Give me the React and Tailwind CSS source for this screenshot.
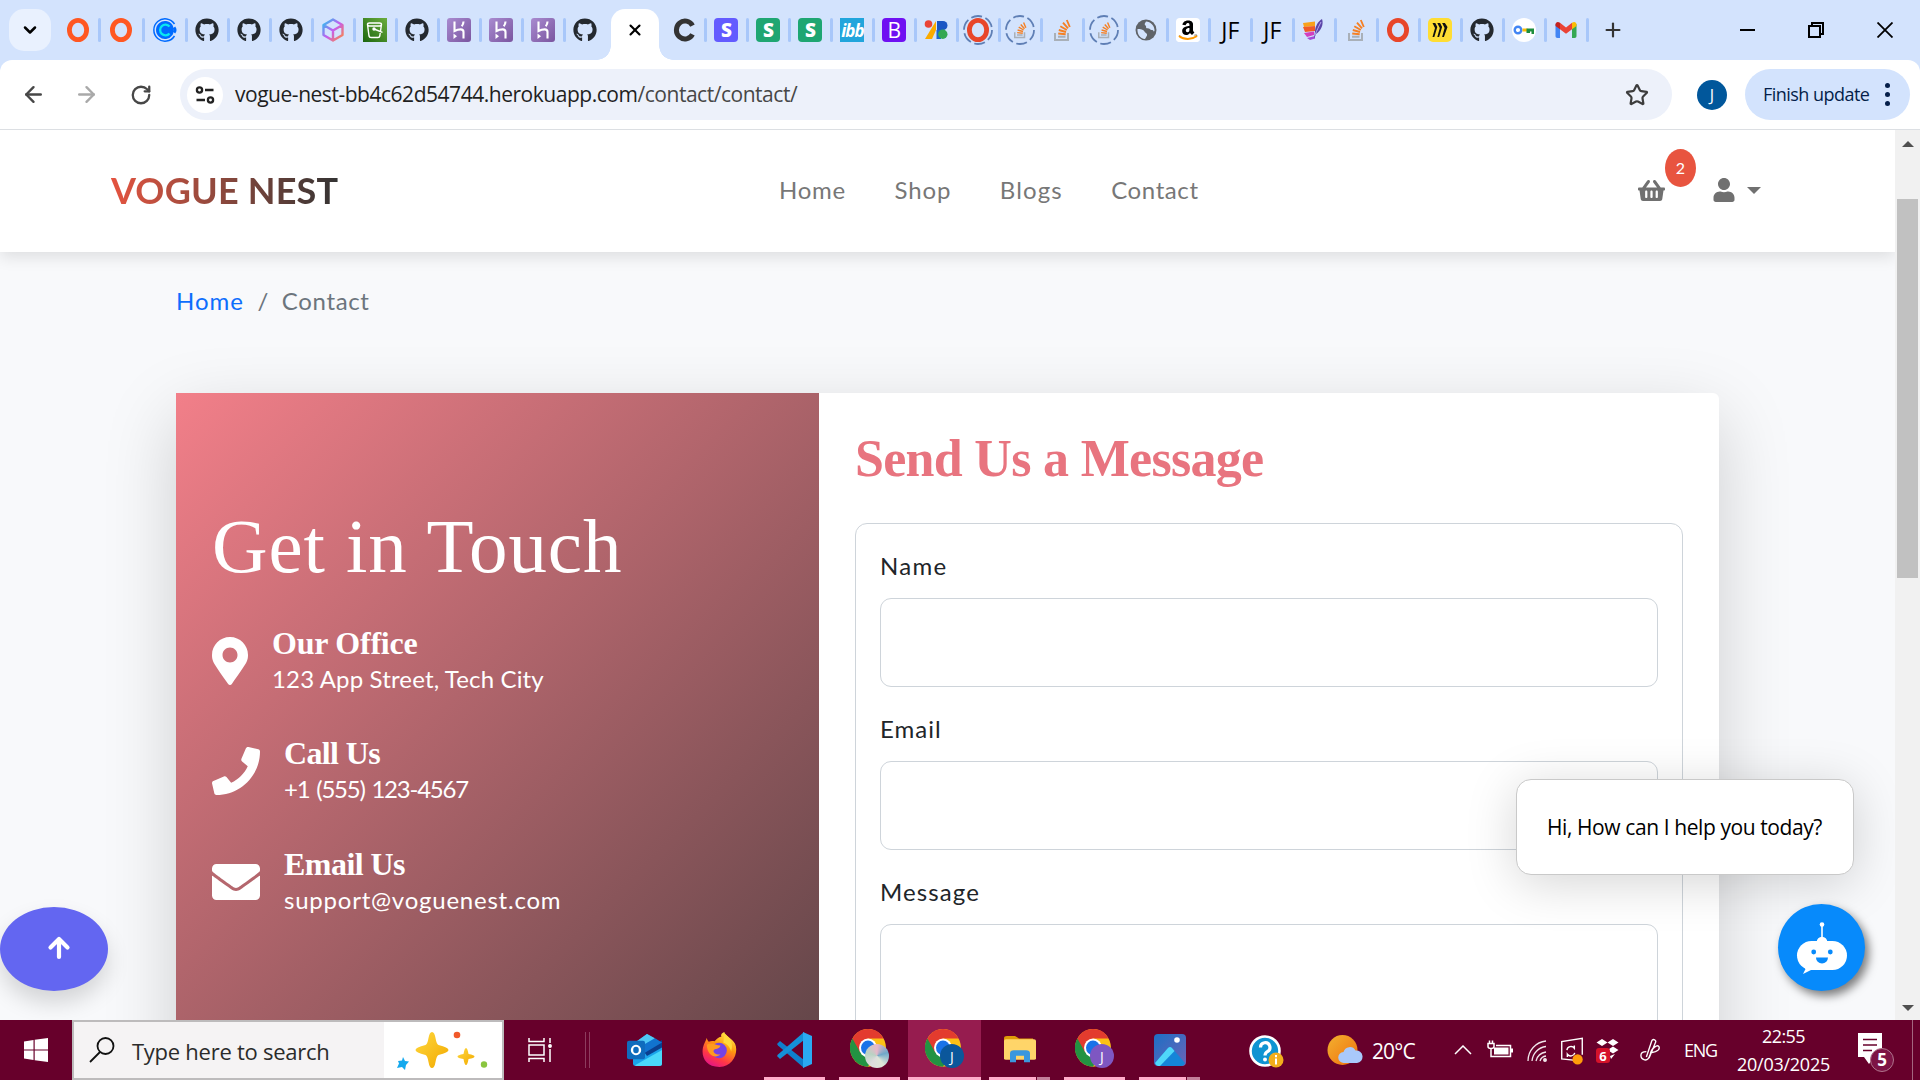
import {
  FaGithub, FaAmazon, FaShoppingBasket, FaUser, FaMapMarkerAlt, FaPhone, FaEnvelope,
} from "react-icons/fa";
import { ChevronDown, X, ArrowLeft, ArrowRight, Star, Plus, RotateCw } from "lucide-react";

/* ---------- favicons ---------- */

const Ring = ({ color }) => (
  <svg viewBox="0 0 24 24" className="size-6"><ellipse cx="12" cy="12" rx="8.6" ry="9.6" fill="none" stroke={color} strokeWidth="4.8" /></svg>
);
const Github = () => <FaGithub className="size-6 text-[#24292f]" />;
const Calendly = () => (
  <svg viewBox="0 0 24 24" className="size-6" fill="none">
    <path d="M21.500 6A11.200 11.200 0 1 0 21.500 18" stroke="#006bff" strokeWidth="1.500" />
    <path d="M19.500 7A9 9 0 1 0 19.500 17Q22 12 19.500 7z" fill="#006bff" />
    <path d="M16.500 8.600A5.300 5.300 0 1 0 16.500 15.400" stroke="#0ae8f0" strokeWidth="2.300" />
    <path d="M21 9.500q2 2.500 0 5" stroke="#006bff" strokeWidth="3" />
  </svg>
);
const Cube = () => (
  <svg viewBox="0 0 24 24" className="size-6" fill="none" strokeWidth="2.4" strokeLinejoin="round">
    <defs>
      <linearGradient id="cube" x1="0" y1="0" x2="1" y2="1">
        <stop offset="0" stopColor="#22c7f0" /><stop offset=".5" stopColor="#c45cf0" /><stop offset="1" stopColor="#ff8a3c" />
      </linearGradient>
    </defs>
    <path d="M12 1.5 21.5 7v10L12 22.5 2.5 17V7zM2.5 7l9.500 5.500L21.500 7M12 12.500v10" stroke="url(#cube)" />
  </svg>
);
const Bucket = () => (
  <svg viewBox="0 0 24 24" className="size-6" fill="none" stroke="#fff" strokeWidth="1.4">
    <defs><linearGradient id="s3" x1="0" y1="1" x2="1" y2="0"><stop stopColor="#1b660f" /><stop offset="1" stopColor="#6cae3e" /></linearGradient></defs>
    <path d="M0 0h24v24H0z" fill="url(#s3)" stroke="none" />
    <path d="M4.500 6.500q0-1.500 2-1.500h10q2 0 2 1.500t-2 1.500h-10q-2 0-2-1.500L6 18q.3 1.500 2 1.500h7q1.500 0 1.800-1.500l1.700-11.500M11 11l8.500 3.300" />
    <circle cx="11" cy="11" r="1" fill="#fff" />
  </svg>
);
const Heroku = () => (
  <svg viewBox="0 0 24 24" className="size-6" fill="none" stroke="#fff" strokeWidth="2.1">
    <defs><linearGradient id="hk" x1="0" y1="0" x2="1" y2="1"><stop stopColor="#a98bd0" /><stop offset="1" stopColor="#7a559f" /></linearGradient></defs>
    <rect width="24" height="24" rx="3" fill="url(#hk)" stroke="none" />
    <path d="M7.500 3.500v9.500c2-1 4-1.600 6.200-1.600 2 0 2.800 1 2.800 2.600v6.500M16.500 3.500c0 1.900-.8 3.600-1.800 4.700" />
    <path d="M6.500 15.500l3.500 2.700-3.500 2.800z" fill="#fff" stroke="none" />
  </svg>
);
const LetterC = () => (
  <svg viewBox="0 0 24 24" className="size-6" fill="none"><path d="M20.500 7.600A8.600 9 0 1 0 20.500 16.400" stroke="#333" strokeWidth="5" /></svg>
);
const Letter = ({ className, children }) => (
  <span className={"flex size-6 items-center justify-center leading-none " + className}>{children}</span>
);
const Stripe = ({ className }) => <Letter className={"rounded-[4px] text-[19px] font-extrabold text-white font-['Open_Sans'] " + className}>S</Letter>;
const Abstract = () => (
  <svg viewBox="0 0 24 24" className="size-6">
    <circle cx="4.500" cy="6" r="3.800" fill="#ea4335" />
    <path d="M12 3v9l-4 9H1z" fill="#fbab00" />
    <path d="M13 3h6a4.500 4.500 0 0 1 0 9h-6z" fill="#1a56c4" />
    <path d="M12.500 12H17v9h-4.500z" fill="#1967d2" />
    <circle cx="18.800" cy="16.300" r="4.700" fill="#34a853" />
  </svg>
);
const Stack = ({ className }) => (
  <svg viewBox="0 0 24 24" className={className} fill="none">
    <path d="M5 15v7h13v-7M8 18.800h7.500" stroke="#a9b0b8" strokeWidth="2" />
    <path d="M8.200 15.500l7.500.8M8.800 12l7.200 2M10.300 8.200l6.500 3.800M13 4.600l5 5.700M16.800 2l3 7" stroke="#f58025" strokeWidth="1.900" />
  </svg>
);
const Loading = ({ children }) => (
  <span className="relative flex size-[30px] shrink-0 items-center justify-center">
    <svg viewBox="0 0 30 30" className="absolute inset-0" fill="none">
      <circle cx="15" cy="15" r="14" stroke="#5f7fb5" strokeWidth="1.800" strokeDasharray="11 3.660" />
    </svg>
    {children}
  </span>
);
const Globe = () => (
  <svg viewBox="0 0 24 24" className="size-6">
    <circle cx="12" cy="12" r="10.500" fill="#5f6368" />
    <path d="M3.500 11c3 0 6 .5 7 2.500s3 1.500 2.500 4l-2 3.500C6 20.500 3 16 3.500 11zM12 3.500c-1 2-2 2.500-.5 4s-.5 2.800 2 2.800 2.500 2 4.500 1.700 1 2.500 2.500 1c.5-5-4-9.500-8.500-9.500z" fill="#d3e3fd" />
  </svg>
);
const Amazon = () => (
  <span className="relative flex size-6 items-center justify-center overflow-hidden rounded-[4px] bg-white">
    <FaAmazon className="size-[22px] text-black" />
    <svg viewBox="0 0 24 24" className="absolute inset-0"><path d="M0 17.500h24v6.500H0z" fill="#fff" /><path d="M3 18c5 4 12.500 4 18 0" stroke="#ff9900" strokeWidth="2" fill="none" /></svg>
  </span>
);
const Feather = () => (
  <svg viewBox="0 0 24 24" className="size-6">
    <path d="M1 5l12-1.500V8L2 9z" fill="#f9a11b" /><path d="M1 9l12-1v5L3 14z" fill="#f05a28" />
    <path d="M2 15l10-1.500V17L5 19z" fill="#d23fbf" /><path d="M5 20l8-2v2.500L8 22z" fill="#a44bd8" />
    <path d="M20 1c2 5-1 12-6 15l-2 5 1-8c.5-5 3-9.500 7-12z" fill="#5b45a8" />
    <path d="M19 4c-2 4-4 8-6 13" stroke="#b9a7f0" fill="none" />
  </svg>
);
const Miro = () => (
  <svg viewBox="0 0 24 24" className="size-6" fill="#111">
    <rect width="24" height="24" rx="5" fill="#ffdd33" />
    <path d="M4.500 5h2.800l2 4-3 10H4.500L7 10zM9.300 5h2.800l2 4-3 10H9.300l2.500-9zM14.100 5h2.800l2.600 4-3.600 10h-1.800l2.500-9z" />
  </svg>
);
const Key = () => (
  <span className="flex size-6 items-center justify-center rounded-full bg-white">
    <svg viewBox="0 0 22 12" className="w-[22px]" fill="none">
      <circle cx="5" cy="6" r="3.300" stroke="#4285f4" strokeWidth="2.400" />
      <path d="M9.500 6h5" stroke="#fbbc04" strokeWidth="3" /><path d="M13.500 4.500H21V10h-2.500V7.500H17V9h-3.500z" fill="#1e8e3e" />
    </svg>
  </span>
);
const Gmail = () => (
  <svg viewBox="0 0 24 24" className="size-6">
    <path d="M1.500 6v12c0 1 .7 2 2 2H6V9z" fill="#4285f4" /><path d="M22.500 6v12c0 1-.7 2-2 2H18V9z" fill="#34a853" />
    <path d="M6 4.800v6.400l6 4.600 6-4.600V4.800L12 9.500z" fill="#ea4335" />
    <path d="M1.500 6.500C1.500 4 4 3.200 6 4.800v6.400L1.500 8z" fill="#c5221f" /><path d="M22.500 6.500c0-2.500-2.500-3.300-4.500-1.700v6.400L22.500 8z" fill="#fbbc04" />
  </svg>
);
const Jf = () => <span className="text-[23px] tracking-[0.2px] text-black">JF</span>;

const leftTabs = [
  <Ring color="#ff5722" />, <Ring color="#ff5722" />, <Calendly />, <Github />, <Github />, <Github />, <Cube />,
  <Bucket />, <Github />, <Heroku />, <Heroku />, <Heroku />, <Github />,
];
const rightTabs = [
  <LetterC />, <Stripe className="bg-[#635bff]" />, <Stripe className="bg-[#1fa672]" />, <Stripe className="bg-[#1fa672]" />,
  <Letter className="bg-[#21a5dc] text-[17px] font-bold italic tracking-[-1px] text-white">ibb</Letter>,
  <Letter className="rounded-[4px] bg-[#6f10f2] text-[21px] text-white">B</Letter>,
  <Abstract />,
  <Loading><Ring color="#e8462a" /></Loading>,
  <Loading><Stack className="size-[18px]" /></Loading>,
  <Stack className="size-6" />,
  <Loading><Stack className="size-[18px]" /></Loading>,
  <Globe />, <Amazon />, <Jf />, <Jf />, <Feather />, <Stack className="size-6" />, <Ring color="#e8462a" />, <Miro />,
  <Github />, <Key />, <Gmail />,
];

function Tab({ children, divider = true, wide = false }) {
  return (
    <div className={"flex h-6 items-center " + (wide ? "w-[43.3px]" : "w-[42px]")}>
      <div className="flex flex-1 items-center justify-center overflow-visible">{children}</div>
      <div className={"h-6 w-[3px] rounded-sm " + (divider ? "bg-[#a8c7fa]" : "")} />
    </div>
  );
}

function TabStrip() {
  return (
    <div className="flex h-[60px] items-center bg-[#d3e3fd]">
      <div className="ml-[9px] flex size-[42px] items-center justify-center rounded-[15px] bg-[#e9f1fe]">
        <ChevronDown className="size-[20px]" strokeWidth={3} />
      </div>
      <div className="ml-[7px] flex">
        {leftTabs.map((icon, i) => <Tab key={i} wide={i < 3} divider={i < 12}>{icon}</Tab>)}
      </div>
      <div className="relative ml-[3px] flex h-[51px] w-12 items-center justify-center self-end rounded-t-[14px] bg-white">
        <span className="absolute -left-[14px] bottom-0 h-[14px] w-[14px] bg-[radial-gradient(circle_at_0_0,transparent_13.5px,white_14px)]" />
        <span className="absolute -right-[14px] bottom-0 h-[14px] w-[14px] bg-[radial-gradient(circle_at_100%_0,transparent_13.5px,white_14px)]" />
        <X className="-mt-[9px] size-[18px] text-black" strokeWidth={2.8} />
      </div>
      <div className="ml-[6px] flex">
        {rightTabs.map((icon, i) => <Tab key={i}>{icon}</Tab>)}
      </div>
      <Plus className="ml-[13px] size-[22px] text-[#333]" strokeWidth={2.4} />
      <div className="ml-auto flex items-center gap-[53px] pr-[27px]">
        <div className="h-[2px] w-[15px] bg-black" />
        <svg viewBox="0 0 16 16" className="size-4" fill="none" stroke="#000" strokeWidth="2"><path d="M1 4h11v11H1zM4 4V1h11v11h-3" /></svg>
        <svg viewBox="0 0 16 16" className="size-4" fill="none" stroke="#000" strokeWidth="1.800"><path d="M.5.5l15 15M15.500.5l-15 15" /></svg>
      </div>
    </div>
  );
}

function Toolbar() {
  return (
    <div className="bg-[#d3e3fd]">
      <div className="flex h-[70px] items-center rounded-t-[12px] border-b border-[#dcdfe3] bg-white">
        <ArrowLeft className="ml-[21px] size-[25px] text-[#474747]" strokeWidth={2.3} />
        <ArrowRight className="ml-[28px] size-[25px] text-[#a9a9a9]" strokeWidth={2.3} />
        <RotateCw className="ml-[31px] size-[22px] text-[#474747]" strokeWidth={2.5} />
        <div className="ml-[28px] flex h-[51px] w-[1492px] items-center rounded-full bg-[#edf1fa] pl-[7px]">
          <div className="flex size-9 items-center justify-center rounded-full bg-white">
            <svg viewBox="0 0 20 20" className="size-5" fill="none" stroke="#222" strokeWidth="2.300">
              <circle cx="4.500" cy="5" r="2.600" /><path d="M10 5h8.500M1.500 15H10" /><circle cx="15.500" cy="15" r="2.600" />
            </svg>
          </div>
          <div className="ml-[12px] text-[21px] tracking-[-0.47px] text-[#1f1f1f]">
            vogue-nest-bb4c62d54744.herokuapp.com<span className="text-[#474747]">/contact/contact/</span>
          </div>
          <Star className="ml-auto mr-[23px] size-[24px] text-[#3c3c3c]" strokeWidth={2.2} strokeLinejoin="miter" />
        </div>
        <div className="ml-[25px] flex size-[30px] items-center justify-center rounded-full bg-[#01579b] text-base text-white">J</div>
        <div className="ml-[18px] flex h-[51px] w-[165px] items-center rounded-full bg-[#d3e3fd] pl-[18px]">
          <span className="text-[18px] tracking-[-0.53px] text-[#041e49]">Finish update</span>
          <div className="ml-[16px] flex flex-col gap-[4px]">
            <i className="size-[5px] rounded-full bg-[#041e49]" /><i className="size-[5px] rounded-full bg-[#041e49]" /><i className="size-[5px] rounded-full bg-[#041e49]" />
          </div>
        </div>
      </div>
    </div>
  );
}

/* ---------- site ---------- */

function SiteHeader() {
  return (
    <header className="relative z-10 flex h-[122px] items-center bg-white pb-[2px] pl-[111px] font-[Lato] shadow-[0_5px_15px_rgba(0,0,0,0.11)]">
      <div className="w-[668px]">
        <span className="bg-linear-to-r from-[#e5533f] to-[#333] bg-clip-text text-[36px] font-bold tracking-[0.2px] text-transparent">VOGUE NEST</span>
      </div>
      <nav className="flex gap-[48.400px] text-[24px] text-[#777]">
        <a className="tracking-[0.76px]">Home</a>
        <a className="tracking-[0.93px]">Shop</a>
        <a className="tracking-[1.13px]">Blogs</a>
        <a className="tracking-[0.6px]">Contact</a>
      </nav>
      <div className="ml-auto mr-[134px] flex items-center text-[#707070]">
        <div className="relative">
          <FaShoppingBasket className="size-[27px]" />
          <span className="absolute -top-[28px] left-[27px] flex h-[38px] w-[31px] items-center justify-center rounded-[50%] bg-[#e8543f] text-[16px] text-white">2</span>
        </div>
        <FaUser className="ml-[47px] size-[24px]" />
        <span className="ml-[11px] border-x-[7px] border-t-[7px] border-x-transparent border-t-[#707070]" />
      </div>
    </header>
  );
}

const contacts = [
  { Icon: FaMapMarkerAlt, box: "w-9", title: "Our Office", titleCls: "tracking-[-0.24px]", text: "123 App Street, Tech City", textCls: "tracking-[0.15px]" },
  { Icon: FaPhone, box: "w-12", title: "Call Us", titleCls: "tracking-[-0.64px]", text: "+1 (555) 123-4567", textCls: "tracking-[-1.25px] [word-spacing:2px]" },
  { Icon: FaEnvelope, box: "w-12", title: "Email Us", titleCls: "tracking-[-0.54px]", text: "support@voguenest.com", textCls: "tracking-[0.77px]" },
];

function InfoPanel() {
  return (
    <section className="h-[1045px] w-[643px] bg-[linear-gradient(135deg,#f27f89,#363435)] pl-9 pt-[108px] text-white">
      <h2 className="font-['Liberation_Serif'] text-[77px] leading-[90px] tracking-[0.9px]">Get in Touch</h2>
      <div className="mt-[33.500px] flex flex-col gap-[38.500px]">
        {contacts.map(({ Icon, box, title, titleCls, text, textCls }) => (
          <div key={title} className="flex h-[72px] items-center gap-6">
            <Icon className={"h-12 " + box} />
            <div>
              <h4 className={"font-['Liberation_Serif'] text-[32px] font-bold leading-9 " + titleCls}>{title}</h4>
              <p className={"font-[Lato] text-[24px] leading-9 " + textCls}>{text}</p>
            </div>
          </div>
        ))}
      </div>
    </section>
  );
}

function Field({ label, className, height }) {
  return (
    <div className="mb-6 font-[Lato]">
      <label className={"block h-[50px] text-[24px] leading-9 text-[#212529] " + className}>{label}</label>
      <div className={"rounded-[11px] border border-[#ced4da] bg-white " + height} />
    </div>
  );
}

function FormPanel() {
  return (
    <section className="flex-1 px-9 pt-[35px]">
      <h3 className="font-['Liberation_Serif'] text-[52px] font-bold leading-[62px] tracking-[-0.7px] text-[#e8747f]">Send Us a Message</h3>
      <div className="mt-[33px] rounded-[12px] border border-[#ced4da] px-6 pt-[24px] pb-10">
        <Field label="Name" className="tracking-[1.3px]" height="h-[89px]" />
        <Field label="Email" className="tracking-[1px]" height="h-[89px]" />
        <Field label="Message" className="tracking-[1.1px]" height="h-[300px]" />
      </div>
    </section>
  );
}

function ChatWidget() {
  return (
    <div className="absolute bottom-[29px] right-[30px] z-20 flex flex-col items-end gap-[29px]">
      <div className="mr-[11px] flex h-[96px] w-[338px] items-center rounded-[15px] border border-[#c9c9c9] bg-white pl-[30px] pt-[2px] text-[21px] tracking-[-0.41px] text-black shadow-[0_8px_50px_rgba(0,0,0,0.17)]">
        Hi, How can I help you today?
      </div>
      <div className="size-[87px] rounded-full bg-[#078afb] shadow-[4px_5px_10px_rgba(0,0,0,0.5)]">
        <svg viewBox="0 0 87 87" className="size-full" fill="#fff">
          <circle cx="44" cy="20.500" r="2.300" /><path d="M43.200 21h1.600v14h-1.600z" />
          <circle cx="44" cy="38" r="5.300" />
          <rect x="19" y="37" width="50" height="29" rx="14.500" />
          <path d="M26 63l1.500 2-2.500 5 9-4.500z" />
          <circle cx="35.700" cy="48" r="2.400" fill="#078afb" /><circle cx="52.300" cy="48" r="2.400" fill="#078afb" />
          <path d="M38 53.500h12a6 6 0 0 1-12 0z" fill="#078afb" />
        </svg>
      </div>
    </div>
  );
}

function ScrollTop() {
  return (
    <div className="absolute bottom-[29px] left-0 z-20 flex h-[84px] w-[108px] items-center justify-center rounded-[50%] bg-[#6366f1] pl-[9px] shadow-[0_12px_22px_rgba(0,0,0,0.15)]">
      <svg viewBox="0 0 24 24" className="-mt-[2px] size-6" fill="none" stroke="#fff" strokeWidth="4.200" strokeLinecap="round" strokeLinejoin="round">
        <path d="M12 21V3M3.500 11.500L12 3l8.500 8.500" />
      </svg>
    </div>
  );
}

function Scrollbar() {
  return (
    <div className="flex w-[25px] flex-col items-center bg-[#f1f1f1]">
      <span className="mt-[11px] border-x-[6px] border-b-[6px] border-x-transparent border-b-[#505050]" />
      <div className="mt-[52px] h-[379px] w-[21px] bg-[#c1c1c1]" />
      <span className="mb-[9px] mt-auto border-x-[6px] border-t-[6px] border-x-transparent border-t-[#505050]" />
    </div>
  );
}

/* ---------- taskbar ---------- */

const Chrome = ({ badge, children }) => (
  <span className="relative h-[49px] w-[39px]">
    <svg viewBox="0 0 36 44" preserveAspectRatio="none" className="absolute left-0 top-0 h-[45px] w-9">
      <g transform="matrix(1 0 0 1.020 0 4)">
        <circle cx="18" cy="18" r="18" fill="#fbc116" />
        <path d="M18 18L2.400 9A18 18 0 0 0 18 36l7.800-13.500z" fill="#229342" />
        <path d="M18 9h15.600A18 18 0 0 0 2.400 9l7.800 13.500z" fill="#e33b2e" />
        <circle cx="18" cy="18" r="9" fill="#fff" /><circle cx="18" cy="18" r="7" fill="#1a73e8" />
      </g>
    </svg>
    <span className={"absolute bottom-[6px] right-0 flex size-6 items-center justify-center rounded-full text-[14px] text-white " + badge}>{children}</span>
  </span>
);
const Outlook = () => (
  <span className="relative h-[32px] w-9">
    <svg viewBox="0 0 36 38" preserveAspectRatio="none" className="absolute inset-0 h-full w-full">
      <path d="M6 12L20 0l15 11v24q0 3-3 3H9q-3 0-3-3z" fill="#1aa3ea" />
      <path d="M6 12L20 0l8 5L12 16z" fill="#50c8f5" /><path d="M17 21L35 7v9L20 26z" fill="#0a3f8f" /><path d="M12 16l16-11 7 5-18 13z" fill="#1173cf" />
      <path d="M8 37l27-18v16q0 3-3 3H9z" fill="#4ad8fa" />
      <rect y="8" width="18" height="22" rx="2" fill="#0f6cbd" />
      <ellipse cx="9" cy="19" rx="4" ry="5" fill="none" stroke="#fff" strokeWidth="2.400" />
    </svg>
  </span>
);
const Firefox = () => (
  <svg viewBox="0 0 36 36" className="size-[35px]">
    <defs>
      <linearGradient id="ff" x1=".8" y1="0" x2=".3" y2="1"><stop stopColor="#fff44f" /><stop offset=".4" stopColor="#ff980e" /><stop offset=".75" stopColor="#ff3647" /><stop offset="1" stopColor="#e31587" /></linearGradient>
    </defs>
    <path d="M5 6c0 2 1 3 2 4 2-1 4-1 6-.5C15 7 18 5 20 5c-1-2 0-4 3-5 0 4 8 6 11 12 4 9-2 24-16 24S-1 26 1 16C2 12 4 9 5 6z" fill="url(#ff)" />
    <circle cx="17.500" cy="19" r="8" fill="#7542e5" /><path d="M5 13c5-3 9 1 14 1-1 4-6 3-7 5s3 5 7 4c-5 5-14 1-14-10z" fill="#ff9a1f" />
    <path d="M23 1c5 5 10 9 7 19-1-4-4-8-8-9z" fill="#ffd93b" />
  </svg>
);
const VsCode = () => (
  <svg viewBox="0 0 36 36" className="size-9">
    <path d="M0 12l3-3 24 19v8L1 13.500z" fill="#0f7fcc" /><path d="M0 24l3 3L27 8V0L1 22.500z" fill="#1590d8" />
    <path d="M26 0l9 4v28l-9 4z" fill="#2aaaf2" />
  </svg>
);
const Explorer = () => (
  <svg viewBox="0 0 32 34" preserveAspectRatio="none" className="h-[27px] w-8">
    <path d="M0 3q0-3 3-3h8l4 3h14v8H0z" fill="#dd9b08" /><rect y="4" width="32" height="26" rx="2" fill="#ffd569" />
    <path d="M6 33V22q0-4 4-4h12q4 0 4 4v11h-6v-8h-8v8z" fill="#3b97de" />
  </svg>
);
const Photos = () => (
  <svg viewBox="0 0 32 32" className="size-8">
    <defs><linearGradient id="ph" x1="0" y1="0" x2="1" y2="1"><stop stopColor="#1c6fc4" /><stop offset="1" stopColor="#6d63b8" /></linearGradient></defs>
    <rect width="32" height="32" rx="4" fill="url(#ph)" /><path d="M1 29L14 14q2-2 4 0l13 15q-1 3-4 3H4q-2 0-3-3z" fill="#1585d8" />
    <path d="M1 29L14 14q2-2 4 0l2.500 3L6 32H4q-2 0-3-3z" fill="#4fd8fa" /><circle cx="23" cy="6" r="2.800" fill="#fff" />
  </svg>
);

const apps = [
  { icon: <Outlook />, line: "" },
  { icon: <Firefox />, line: "" },
  { icon: <VsCode />, line: "one" },
  { icon: <Chrome badge="bg-[conic-gradient(#e8b7c9,#6fa8c9,#dfe7d8,#ddd,#b9d3c4,#e8b7c9)]" />, line: "one" },
  { icon: <Chrome badge="bg-[#0b579b]">J</Chrome>, line: "active" },
  { icon: <Explorer />, line: "many" },
  { icon: <Chrome badge="bg-[#7e57c2]">J</Chrome>, line: "one" },
  { icon: <Photos />, line: "many" },
];

function AppButton({ icon, line }) {
  return (
    <div className="relative flex h-full w-[75px] items-center justify-center pb-[1px]">
      {line === "active" && <span className="absolute inset-y-0 left-[1px] w-[73px] bg-[#961c4f]" />}
      <span className="relative flex">{icon}</span>
      {line === "one" && <span className="absolute bottom-0 h-[3px] w-[61px] bg-[#ffadcb]" />}
      {line === "active" && <span className="absolute bottom-0 left-[1px] h-[3px] w-[73px] bg-[#ffadcb]" />}
      {line === "many" && (
        <span className="absolute bottom-0 flex h-[3px] w-[61px]"><i className="w-[47px] bg-[#ffadcb]" /><i className="ml-px flex-1 bg-[#c37f9a]" /></span>
      )}
    </div>
  );
}

function SearchBox() {
  return (
    <div className="flex h-[60px] w-[432px] border-2 border-[#bdbbbc] bg-[#f5f3f4]">
      <svg viewBox="0 0 26 26" className="ml-[15px] mt-[15px] size-[26px]" fill="none" stroke="#111" strokeWidth="1.800"><circle cx="16.500" cy="9" r="8" /><path d="M11 15L1 25" /></svg>
      <span className="ml-[17px] w-[252px] self-center pt-[3px] text-[22px] tracking-[-0.26px] text-[#2b2b2b]">Type here to search</span>
      <div className="flex-1 bg-white">
        <svg viewBox="0 0 117 56" className="h-14 w-[117px]">
          <defs><linearGradient id="spark" x1="0" y1="0" x2="1" y2="1"><stop stopColor="#ffd83d" /><stop offset="1" stopColor="#f2a900" /></linearGradient></defs>
          <path d="M48 10q2.500 0 3.500 6t3 7q10 2.500 10 5t-10 5q-2 1-3 7t-3.500 6-3.500-6-3-7q-10-2.500-10-5t10-5q2-1 3-7t3.500-6z" fill="url(#spark)" />
          <path d="M82 26q1.500 0 2.500 6 6 1 6 2.500t-6 2.500q-1 6-2.500 6t-2.500-6q-6-1-6-2.500t6-2.500q1-6 2.500-6z" fill="url(#spark)" />
          <path d="M19 35l2 4 4 .5-3 3.500-1 5-3-3-5 1 2-4.500-1-2.500 4-.5z" fill="#14a9ee" />
          <circle cx="73" cy="13" r="3.300" fill="#f1592a" /><circle cx="100" cy="42.500" r="3.200" fill="#8ac53f" />
        </svg>
      </div>
    </div>
  );
}

function Tray() {
  return (
    <div className="ml-auto flex h-full items-center text-white">
      <svg viewBox="0 0 36 42" className="mt-[4px] h-[42px] w-9">
        <circle cx="17" cy="20" r="14.500" fill="#0f94d2" stroke="#fff" strokeWidth="2.600" />
        <path d="M12.500 16.500a4.700 4.700 0 1 1 7 4q-2.500 1.500-2.500 4" stroke="#fff" strokeWidth="3.200" fill="none" /><circle cx="17" cy="28.500" r="2" fill="#fff" />
        <circle cx="28" cy="29" r="7.500" fill="#f2ae1c" /><path d="M28 27.500v6M28 24v2.200" stroke="#fff" strokeWidth="2" />
      </svg>
      <svg viewBox="0 0 36 36" className="ml-[43px] mt-[3px] size-9">
        <defs><linearGradient id="sun" x1="0" y1="0" x2="1" y2="1"><stop stopColor="#f2b130" /><stop offset="1" stopColor="#f0700c" /></linearGradient></defs>
        <circle cx="15.500" cy="16" r="15" fill="url(#sun)" /><path d="M17 29a5.500 5.500 0 0 1-.5-11 6.500 6.500 0 0 1 12-1.500 6 6 0 0 1 1.500 12.500z" fill="#a9c9fb" />
      </svg>
      <span className="ml-[9px] mt-[3px] w-[82px] text-[21px] tracking-[-0.8px]">20°C</span>
      <svg viewBox="0 0 18 10" className="w-[18px]" fill="none" stroke="#fff" strokeWidth="1.500"><path d="M1 9l8-8 8 8" /></svg>
      <svg viewBox="0 0 26 18" className="ml-[15px] -mt-[3px] w-[26px]" fill="none" stroke="#fff" strokeWidth="1.500">
        <path d="M1 3.500h6v3q0 2-3 2t-3-2zM2.500.5v3M5.500.5v3M4 8.500v8h19.500v-11H9" /><path d="M7 7.500h14.500v7H7z" fill="#fff" stroke="none" /><path d="M25 8.500v4" strokeWidth="2" />
      </svg>
      <svg viewBox="0 0 20 22" className="ml-[14px] mt-[2px] w-[20px]" fill="none" stroke="#fff" strokeWidth="1.300" opacity=".9">
        <path d="M1 21A20 20 0 0 1 19 1M5 21A16 16 0 0 1 19 6.500M9 21a12 12 0 0 1 10-9M13 21a7 7 0 0 1 6-5" /><circle cx="18" cy="20" r="1.300" fill="#fff" />
      </svg>
      <svg viewBox="0 0 26 30" className="ml-[12px] mt-[1px] h-[28px] w-[26px]" fill="none" stroke="#fff" strokeWidth="1.500">
        <path d="M17 25L2 23.500V5L24 1.500V19M7.500 14a4.500 4.500 0 0 1 8-2v-3M16 17a4.500 4.500 0 0 1-8 1.500v3" /><circle cx="19" cy="24" r="5.500" fill="#ff9d0a" stroke="none" />
      </svg>
      <svg viewBox="0 0 24 24" className="ml-[11px] mt-[2px] h-[24px] w-[24px]" fill="#fff">
        <path d="M6 0l5.500 3.500L6 7 .5 3.500zM17 0l5.500 3.500L17 7l-5.500-3.500zM17 7.500l5.500 3.500-5.500 3.500-5.500-3.500zM14 17l5-2-4 5z" />
        <rect y="9" width="14" height="15" rx="3" fill="#d5122a" />
        <text x="7" y="21.500" textAnchor="middle" className="font-['Open_Sans'] text-[13px] font-bold">6</text>
      </svg>
      <svg viewBox="0 0 22 26" className="ml-[20px] w-[20px]" fill="none" stroke="#fff" strokeWidth="1.500">
        <path d="M7 21L13 3q1-2 3-1t1 3L10 22M7 15q-6 0-6 4t4 5 6-5q1-6 5-9t5 0-4 5l-4 1" />
      </svg>
      <span className="ml-[24px] text-[18px] tracking-[-1.2px]">ENG</span>
      <div className="ml-[20px] flex flex-col items-center text-[18px] leading-7">
        <span className="tracking-[-0.58px]">22:55</span><span className="tracking-[-0.25px]">20/03/2025</span>
      </div>
      <div className="relative ml-[28px] w-[54px]">
        <svg viewBox="0 0 25 32" className="-mt-[2px] h-8 w-[25px]" fill="#fff"><path d="M0 0h24v24h-8l-5 7-5-7H0z" /><path d="M5 6.500h14M5 12h14M5 17.500h9" stroke="#67002b" strokeWidth="1.500" /></svg>
        <span className="absolute left-[12px] top-[13px] flex size-6 items-center justify-center rounded-full border border-[#b0758d] bg-[#7d1445] text-[17px] font-bold">5</span>
      </div>
      <div className="mr-[7px] h-full w-px bg-[#a4667f]" />
    </div>
  );
}

function Taskbar() {
  return (
    <footer className="flex h-[60px] items-center bg-[#67002b]">
      <svg viewBox="0 0 24 24" className="mx-6 size-6" fill="#fff"><path d="M0 3.500L9.500 2v9.400H0zM10.700 1.800L24 0v11.400H10.700zM0 12.600h9.500V22L0 20.500zM10.700 12.600H24V24l-13.300-1.800z" /></svg>
      <SearchBox />
      <svg viewBox="0 0 24 24" className="ml-6 size-6" fill="none" stroke="#fff" strokeWidth="1.500">
        <path d="M1 0v3.500h15V0M1 7h15v10H1zM1 24v-3.500h15V24M22 0v5M22 11v13" /><circle cx="22" cy="8" r="1.200" fill="#fff" />
      </svg>
      <div className="ml-[33px] h-9 w-[5px] border-x border-[#8d3c5e]" />
      <div className="ml-[17px] flex h-full">{apps.map((a, i) => <AppButton key={i} {...a} />)}</div>
      <Tray />
    </footer>
  );
}

export default function App() {
  return (
    <div className="flex h-[1080px] w-[1920px] flex-col overflow-hidden bg-white font-['Open_Sans',sans-serif]">
      <TabStrip />
      <Toolbar />
      <div className="flex h-[890px]">
        <main className="relative flex-1 overflow-hidden bg-[#f8f9fb]">
          <SiteHeader />
          <div className="mt-[31px] flex gap-[13.500px] pl-[176px] font-[Lato] text-[24px] leading-9 text-[#6c757d]">
            <a className="tracking-[1px] text-[#0d6efd]">Home</a><span>/</span><span className="tracking-[0.65px]">Contact</span>
          </div>
          <div className="ml-[176px] mt-[74px] flex w-[1543px] rounded-r-[6px] bg-white shadow-[0_24px_72px_rgba(0,0,0,0.175)]">
            <InfoPanel />
            <FormPanel />
          </div>
          <ChatWidget />
          <ScrollTop />
        </main>
        <Scrollbar />
      </div>
      <Taskbar />
    </div>
  );
}
